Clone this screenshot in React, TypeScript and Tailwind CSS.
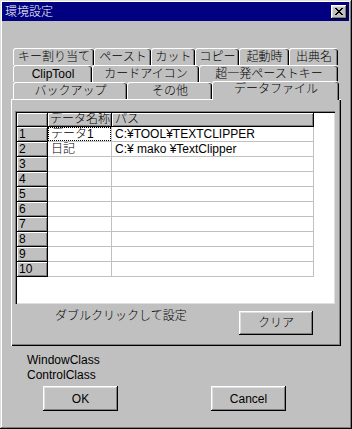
import React from "react";

const RAISED =
  "shadow-[inset_-1px_-1px_#000,inset_1px_1px_#fff,inset_-2px_-2px_#808080,inset_2px_2px_#dfdfdf]";

const row1 = [
  { label: "キー割り当て", w: "w-[81px]" },
  { label: "ペースト", w: "w-[57px]" },
  { label: "カット", w: "w-[44px]" },
  { label: "コピー", w: "w-[44px]" },
  { label: "起動時", w: "w-[50px]" },
  { label: "出典名", w: "w-[49px]" },
];
const row2 = [
  { label: "ClipTool", w: "w-[79px]" },
  { label: "カードアイコン", w: "w-[107px]" },
  { label: "超一発ペーストキー", w: "w-[139px]" },
];
const row3 = [
  { label: "バックアップ", w: "w-[114px]" },
  { label: "その他", w: "w-[85px]" },
];

const TAB =
  "h-[17px] shrink-0 border-t border-l border-white rounded-t-[3px] bg-[#c0c0c0] shadow-[inset_-1px_0_#000,inset_-2px_0_#808080] text-[12px] leading-[15px] pt-[1px] text-center text-black whitespace-nowrap overflow-hidden";

function Tab({ label, w }: { label: string; w: string }) {
  return <div className={`${TAB} ${w}`}>{label}</div>;
}

const data: { name: string; path: string }[] = [
  { name: "データ1", path: "C:¥TOOL¥TEXTCLIPPER" },
  { name: "日記", path: "C:¥ mako ¥TextClipper" },
];

const HEAD =
  "h-[14px] shrink-0 bg-[#c0c0c0] border-r border-b border-black shadow-[inset_1px_1px_#fff,inset_-1px_-1px_#808080] text-[12px] leading-[13px] text-black whitespace-nowrap overflow-hidden";

function CloseGlyph() {
  const px: [number, number][] = [
    [0, 0], [1, 0], [6, 0], [7, 0],
    [1, 1], [2, 1], [5, 1], [6, 1],
    [2, 2], [3, 2], [4, 2], [5, 2],
    [3, 3], [4, 3],
    [2, 4], [3, 4], [4, 4], [5, 4],
    [1, 5], [2, 5], [5, 5], [6, 5],
    [0, 6], [1, 6], [6, 6], [7, 6],
  ];
  return (
    <svg width="8" height="7" viewBox="0 0 8 7" shapeRendering="crispEdges">
      {px.map(([x, y], i) => (
        <rect key={i} x={x} y={y} width="1" height="1" fill="#000" />
      ))}
    </svg>
  );
}

export default function App() {
  const rows = Array.from({ length: 10 }, (_, i) => i);
  return (
    <div className="w-[352px] h-[429px] bg-[#c0c0c0] pl-[2px] pt-[2px] pr-[3px] flex flex-col font-light font-['Liberation_Sans','Noto_Sans_CJK_JP',sans-serif] shadow-[inset_-1px_-1px_#000,inset_1px_1px_#dfdfdf,inset_-2px_-2px_#808080,inset_2px_2px_#fff] select-none">
      {/* Title bar */}
      <div className="h-[19px] shrink-0 bg-[#000080] flex items-center justify-between">
        <span className="pl-[3px] text-white text-[12px] leading-[14px]">環境設定</span>
        <div className={`w-[16px] h-[14px] mr-[2px] bg-[#c0c0c0] flex items-center justify-center pb-[1px] ${RAISED}`}>
          <CloseGlyph />
        </div>
      </div>

      {/* Tabs */}
      <div className="mt-[27px] ml-[11px] flex flex-col">
        <div className="flex h-[17px]">
          {row1.map((t) => (
            <Tab key={t.label} {...t} />
          ))}
        </div>
        <div className="flex h-[17px]">
          {row2.map((t) => (
            <Tab key={t.label} {...t} />
          ))}
        </div>
        <div className="flex h-[17px] items-end">
          {row3.map((t) => (
            <Tab key={t.label} {...t} />
          ))}
          <div className="relative z-10 w-[127px] h-[19px] mb-[-1px] shrink-0 border-t border-l border-white rounded-t-[3px] bg-[#c0c0c0] shadow-[inset_-1px_0_#000,inset_-2px_0_#808080] text-[12px] leading-[15px] text-center text-black">
            データファイル
          </div>
        </div>
      </div>

      {/* Panel */}
      <div className="ml-[9px] w-[330px] h-[247px] shrink-0 bg-[#c0c0c0] shadow-[inset_1px_1px_#fff,inset_-1px_-1px_#000,inset_-2px_-2px_#808080] pl-[4px] pt-[12px] flex flex-col">
        <div className="w-[320px] h-[193px] bg-white p-[2px] shadow-[inset_1px_1px_#808080,inset_2px_2px_#000,inset_-1px_-1px_#dfdfdf]">
          {/* header row */}
          <div className="flex">
            <div className={`${HEAD} w-[31px]`} />
            <div className={`${HEAD} w-[64px] pl-[2px]`}>データ名称</div>
            <div className={`${HEAD} w-[202px] pl-[3px]`}>パス</div>
          </div>
          {rows.map((i) => {
            const d = data[i];
            return (
              <div key={i} className="flex">
                <div className="w-[31px] h-[15px] shrink-0 bg-[#c0c0c0] border-r border-b border-black shadow-[inset_1px_1px_#fff,inset_-1px_-1px_#808080] text-[12px] leading-[14px] pl-[2px] text-black">
                  {i + 1}
                </div>
                <div className="w-[64px] h-[15px] shrink-0 border-r border-b border-[#c0c0c0] text-[12px] leading-[13px] text-black whitespace-nowrap">
                  {i === 0 ? (
                    <div className="h-[14px] border border-dotted border-black pl-[2px]">{d?.name}</div>
                  ) : (
                    <div className="pl-[3px] pt-[1px]">{d?.name}</div>
                  )}
                </div>
                <div className="w-[202px] h-[15px] shrink-0 border-r border-b border-[#c0c0c0] text-[12px] leading-[13px] pl-[3px] pt-[1px] text-black whitespace-nowrap overflow-hidden">
                  {d?.path}
                </div>
              </div>
            );
          })}
        </div>

        <div className="flex items-start w-[320px] mt-[7px]">
          <span className="ml-[40px] mt-[-2px] text-[12px] leading-[14px] text-black">
            ダブルクリックして設定
          </span>
          <div className={`ml-auto mr-[22px] w-[74px] h-[24px] bg-[#c0c0c0] flex items-center justify-center text-[12px] text-black ${RAISED}`}>
            クリア
          </div>
        </div>
      </div>

      {/* Bottom info */}
      <div className="ml-[25px] mt-[7px] text-[12px] leading-[15px] text-black">
        <div>WindowClass</div>
        <div>ControlClass</div>
      </div>
      <div className="flex mt-[3px] ml-[41px]">
        <div className={`w-[75px] h-[25px] bg-[#c0c0c0] flex items-center justify-center text-[12px] text-black ${RAISED}`}>
          OK
        </div>
        <div className={`ml-[93px] w-[75px] h-[25px] bg-[#c0c0c0] flex items-center justify-center text-[12px] text-black ${RAISED}`}>
          Cancel
        </div>
      </div>
    </div>
  );
}
